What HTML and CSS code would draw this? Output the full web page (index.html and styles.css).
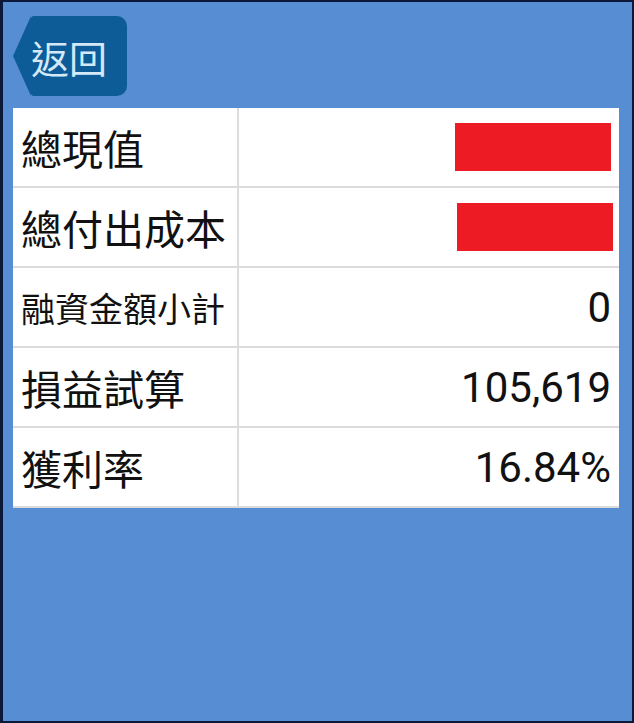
FILE: index.html
```html
<!DOCTYPE html>
<html lang="zh-Hant">
<head>
  <meta charset="UTF-8">
  <meta name="viewport" content="width=device-width, initial-scale=1.0">
  <title>損益試算</title>
<link rel="stylesheet" href="styles.css">
</head>
<body>
<div class="screen">
  <header>
    <div class="back">返回</div>
  </header>
  <div class="summary">
    <div class="label">總現值</div>
    <div class="value"><span class="mask"></span></div>
    <div class="label">總付出成本</div>
    <div class="value"><span class="mask mask-2"></span></div>
    <div class="label small">融資金額小計</div>
    <div class="value">0</div>
    <div class="label">損益試算</div>
    <div class="value">105,619</div>
    <div class="label">獲利率</div>
    <div class="value">16.84%</div>
  </div>
</div>
</body>
</html>
```

FILE: styles.css
```css
body {
  margin: 0;
  padding: 0;
  font-family: Roboto, "Noto Sans CJK TC", sans-serif;
}
.screen {
  height: 723px;
  box-sizing: border-box;
  border: 2px solid #0c1838;
  border-left-width: 3px;
  background: #578ed3;
}
header {
  padding: 14px 0 0 10px;
  height: 80px;
}
.back {
  position: relative;
  display: inline-flex;
  align-items: center;
  height: 80px;
  margin-left: 18px;
  padding: 0 20px 0 0;
  background: #0e5c97;
  color: #d4e9f8;
  font-size: 38px;
  border-radius: 3px 10px 10px 3px;
}
.back::before {
  content: "";
  position: absolute;
  left: -18px;
  top: 0;
  border-right: 18px solid #0e5c97;
  border-top: 40px solid transparent;
  border-bottom: 40px solid transparent;
}
.summary {
  display: grid;
  grid-template-columns: 226px 1fr;
  margin: 12px 13px 0 10px;
  background: #fff;
  color: #111;
}
.label,
.value {
  display: flex;
  align-items: center;
  height: 78px;
  border-bottom: 2px solid #dcdcdc;
  font-size: 41px;
}
.label {
  padding-left: 8px;
  border-right: 2px solid #dcdcdc;
}
.label.small {
  font-size: 34px;
}
.value {
  justify-content: flex-end;
  padding-right: 8px;
  font-size: 42px;
}
.mask {
  display: block;
  width: 156px;
  height: 48px;
  margin-right: 0;
  background: #ed1c24;
}
.mask-2 {
  margin-right: -2px;
}
```
